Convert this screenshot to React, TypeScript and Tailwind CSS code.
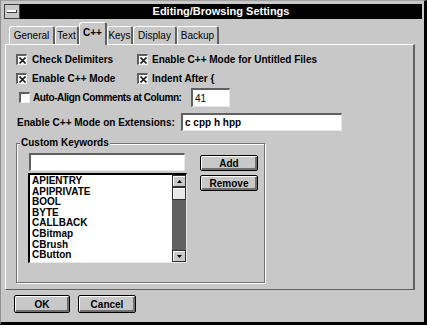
import React from 'react';

const keywords = ['APIENTRY', 'APIPRIVATE', 'BOOL', 'BYTE', 'CALLBACK', 'CBitmap', 'CBrush', 'CButton'];

const tabs = [
  { label: 'General', w: 'w-[46px]' },
  { label: 'Text', w: 'w-[24px]' },
  { label: 'C++', w: 'w-[28px]', active: true },
  { label: 'Keys', w: 'w-[26px]' },
  { label: 'Display', w: 'w-[44px]' },
  { label: 'Backup', w: 'w-[42px]' },
];

function Check({ checked }: { checked?: boolean }) {
  return (
    <span className="flex h-[11px] w-[11px] shrink-0 items-center justify-center border-t-2 border-l-2 border-b border-r border-t-[#606060] border-l-[#606060] border-b-[#f0f0f0] border-r-[#f0f0f0] bg-white">
      {checked && (
        <svg width="7" height="7" viewBox="0 0 7 7">
          <path d="M0.5 0.5L6.5 6.5M6.5 0.5L0.5 6.5" stroke="#202020" strokeWidth="1.6" />
        </svg>
      )}
    </span>
  );
}

function Field({ value, className = '' }: { value?: string; className?: string }) {
  return (
    <div
      className={`flex shrink-0 items-center border-t-2 border-l-2 border-b border-r border-t-[#606060] border-l-[#606060] border-b-[#e8e8e8] border-r-[#e8e8e8] bg-white pl-[2px] text-[10px] ${className}`}
    >
      {value}
    </div>
  );
}

function Btn({ label, className = '' }: { label: string; className?: string }) {
  return (
    <div
      className={`flex items-center justify-center rounded-[2px] border border-black bg-[#c8c8c8] text-[10px] font-bold shadow-[inset_1px_1px_0_#ffffff,inset_-2px_-2px_0_#707070] ${className}`}
    >
      {label}
    </div>
  );
}

function Arrow({ up }: { up?: boolean }) {
  return (
    <div className="flex h-[12px] items-center justify-center border border-[#303030] bg-[#c8c8c8] shadow-[inset_1px_1px_0_#ffffff]">
      <svg width="5" height="3" viewBox="0 0 5 3">
        <path d={up ? 'M0 3L2.5 0L5 3Z' : 'M0 0L2.5 3L5 0Z'} fill="#000" />
      </svg>
    </div>
  );
}

export default function App() {
  return (
    <div className="flex h-[325px] w-[427px] flex-col border-r-[3px] border-b-[3px] border-l border-t border-black border-l-[#909090] border-t-[#a0a0a0] bg-[#c8c8c8] font-['Liberation_Sans',Arial,sans-serif] text-black">
      {/* Title bar */}
      <div className="mt-[3px] ml-[3px] mr-[2px] flex h-[15px]">
        <div className="flex w-[16px] items-center justify-center border border-[#404040] bg-[#c8c8c8]">
          <div className="h-[3px] w-[10px] border-b border-r border-[#404040] bg-white" />
        </div>
        <div className="flex flex-1 items-center justify-center bg-black text-[11px] font-bold text-white">
          Editing/Browsing Settings
        </div>
      </div>

      {/* Tabs */}
      <div className="relative z-10 mt-[3px] flex h-[22px] items-end pl-[8px]">
        {tabs.map((t) => (
          <div
            key={t.label}
            className={`flex shrink-0 items-center justify-center rounded-t-[3px] border-t border-l border-r-2 border-t-white border-l-white border-r-[#606060] bg-[#c8c8c8] text-[10px] ${t.w} ${
              t.active ? '-mb-[1px] h-[23px] pb-[3px] font-bold' : 'h-[18px]'
            }`}
          >
            {t.label}
          </div>
        ))}
      </div>

      {/* Panel */}
      <div className="ml-[4px] flex h-[246px] w-[410px] flex-col border-t border-l border-r-2 border-b border-t-white border-l-white border-r-[#606060] border-b-[#606060] pl-[10px] pt-[8px] text-[10px] font-bold">
        <div className="flex h-[13px] items-center">
          <div className="flex w-[121px] items-center gap-[5px]">
            <Check checked />
            <span>Check Delimiters</span>
          </div>
          <div className="flex items-center gap-[4px]">
            <Check checked />
            <span>Enable C++ Mode for Untitled Files</span>
          </div>
        </div>
        <div className="mt-[6px] flex h-[13px] items-center">
          <div className="flex w-[121px] items-center gap-[5px]">
            <Check checked />
            <span>Enable C++ Mode</span>
          </div>
          <div className="flex items-center gap-[4px]">
            <Check checked />
            <span>Indent After {'{'}</span>
          </div>
        </div>
        <div className="mt-[3px] flex h-[19px] items-center">
          <span className="ml-[3px]">
            <Check />
          </span>
          <span className="ml-[3px] w-[158px] whitespace-nowrap tracking-[-0.4px]">Auto-Align Comments at Column:</span>
          <Field value="41" className="h-[19px] w-[39px] font-normal" />
        </div>
        <div className="mt-[6px] flex h-[18px] items-center">
          <span className="ml-[1px] w-[164px] whitespace-nowrap">Enable C++ Mode on Extensions:</span>
          <Field value="c cpp h hpp" className="h-[18px] w-[161px]" />
        </div>

        {/* Custom Keywords group */}
        <div className="relative mt-[12px] flex h-[140px] w-[249px] border border-[#707070] shadow-[1px_1px_0_#ffffff,inset_1px_1px_0_#ffffff]">
          <span className="absolute -top-[7px] left-[3px] bg-[#c8c8c8] px-[1px] leading-[12px]">Custom Keywords</span>
          <div className="ml-[12px] flex w-[160px] flex-col pt-[9px]">
            <Field className="h-[18px] w-[156px]" />
            <div className="-ml-[1px] mt-[2px] flex h-[90px] w-[159px] border-t-2 border-l-2 border-b border-r border-t-black border-l-black border-b-[#e8e8e8] border-r-[#e8e8e8] bg-white">
              <div className="flex-1 pl-[2px] pt-[1px] leading-[10.6px]">
                {keywords.map((k) => (
                  <div key={k}>{k}</div>
                ))}
              </div>
              <div className="flex w-[14px] flex-col">
                <Arrow up />
                <div className="h-[13px] border border-[#303030] bg-[#e8e8e8] shadow-[inset_1px_1px_0_#ffffff]" />
                <div className="flex-1 bg-[#606060]" />
                <Arrow />
              </div>
            </div>
          </div>
          <div className="ml-[11px] flex flex-col pt-[11px]">
            <Btn label="Add" className="h-[16px] w-[58px]" />
            <Btn label="Remove" className="mt-[4px] h-[16px] w-[58px]" />
          </div>
        </div>
      </div>

      {/* Dialog buttons */}
      <div className="ml-[13px] mt-[5px] flex gap-[8px]">
        <Btn label="OK" className="h-[18px] w-[56px]" />
        <Btn label="Cancel" className="h-[18px] w-[58px]" />
      </div>
    </div>
  );
}
